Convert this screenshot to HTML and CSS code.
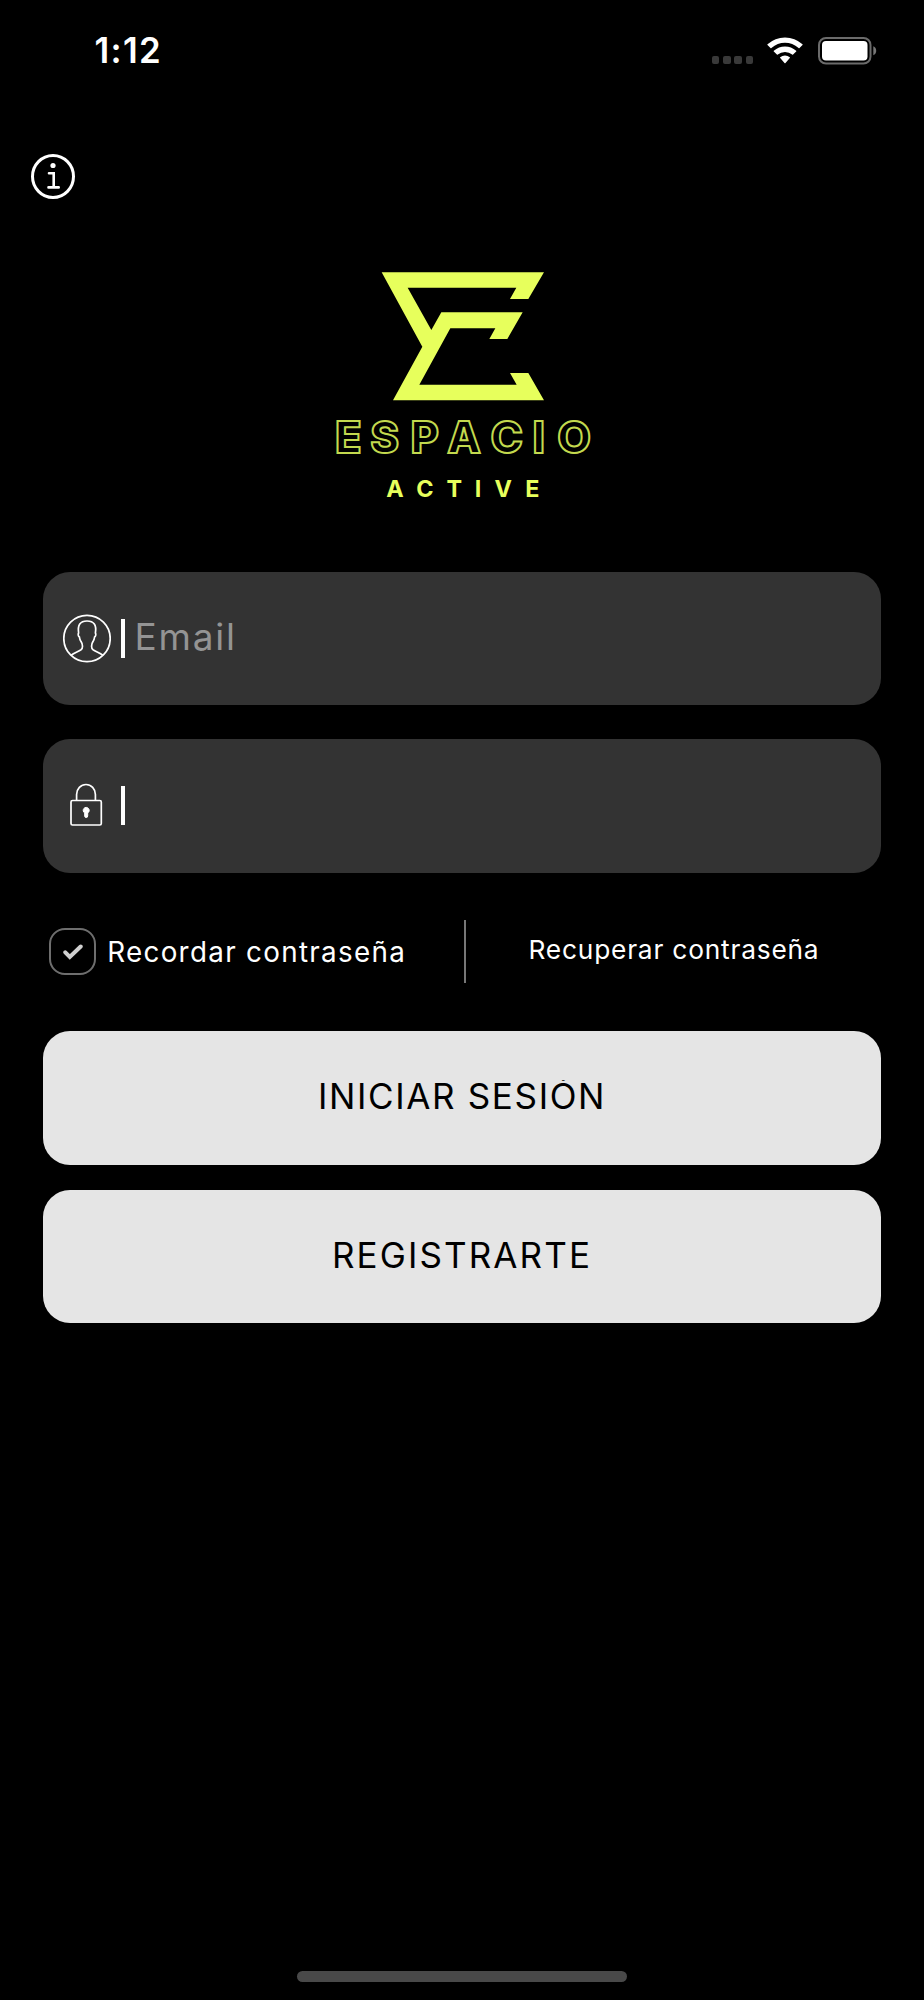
FILE: index.html
```html
<!DOCTYPE html>
<html lang="es">
<head>
<meta charset="UTF-8">
<title>Espacio Active</title>
<meta name="viewport" content="width=device-width, initial-scale=1.0">
<link rel="stylesheet" href="styles.css">
</head>
<body>

<!-- Status bar -->
<header class="status-bar">
    <span class="time">1:12</span>
    <div class="status-icons">
        <div class="signal"><i></i><i></i><i></i><i></i></div>
        <svg class="wifi" viewBox="0 0 36 27" fill="#fff">
            <path d="M.5 7.3Q8 .4 18 .4t17.500 6.900q.4.4 0 .8l-3 3q-.4.4-.9 0Q25.500 5.700 18 5.700T4.400 11.100q-.5.4-.9 0l-3-3q-.4-.4 0-.8z"/>
            <path d="M6.800 13.700Q11.700 9.400 18 9.400t11.200 4.300q.4.4 0 .8l-3.100 3.100q-.4.4-.9 0Q22.200 14.900 18 14.900t-7.200 2.700q-.5.4-.9 0l-3.100-3.100q-.4-.4 0-.8z"/>
            <path d="M13.200 20.300Q15.300 18.500 18 18.500t4.800 1.800q.4.4 0 .8L18.500 25.900q-.5.500-1 0L13.200 21.100q-.4-.4 0-.8z"/>
        </svg>
        <svg class="battery" viewBox="0 0 59 28">
            <rect x="1" y="1" width="51.500" height="25.600" rx="7" fill="none" stroke="#6b6b6b" stroke-width="2"/>
            <rect x="4" y="4" width="45.500" height="19.400" rx="4" fill="#fff"/>
            <path d="M55.300 9.300q2.900 1.300 2.900 4.500t-2.900 4.500z" fill="#777"/>
        </svg>
    </div>
</header>

<main class="login">
    <button class="info" aria-label="Info">
        <svg viewBox="0 0 44 45" fill="none" stroke="#fff">
            <ellipse cx="22" cy="22.500" rx="20.500" ry="21" stroke-width="3"/>
            <circle cx="22" cy="11.500" r="2.600" fill="#fff" stroke="none"/>
            <path d="M18 19.200h4.700v14.200M17.500 33.400h10.200" stroke-width="2.600" stroke-linecap="round"/>
        </svg>
    </button>

    <!-- Logo -->
    <svg class="logo" viewBox="0 0 870 750">
        <path fill="#e7ff5c" d="M185 37H672L625 117H570L589 83H263L334 210 364 157H608L562 237H508L526 205H391L298 374H590L570 339H625L672 421H219L307 260z"/>
        <text class="logo-name" y="579" x="85 194 314 432 560 656 762">ESPACIO</text>
        <text class="logo-sub" y="712" x="225 315 403 474 550 637">ACTIVE</text>
    </svg>

    <div class="field">
        <svg class="field-icon" viewBox="0 0 48 49" fill="none" stroke="#fff" stroke-width="1.700">
            <circle cx="24" cy="24.500" r="23.200"/>
            <path d="M8.300 41.200C11 38.600 15 37.800 18 35.700c2-1.500 2-5.300 0-8.100-1-1.500-1.400-2.900-1.600-4.600-1.200-.7-1.600-2.900-.8-4C14.500 11.200 17 7 24 7s9.700 4.200 8.400 12c.8 1.100.4 3.300-.8 4-.2 1.700-.7 3.100-1.600 4.600-1.900 2.800-1.900 6.600 0 8.100 3 2.100 7 2.900 9.700 5.500"/>
        </svg>
        <span class="caret"></span>
        <span class="placeholder">Email</span>
    </div>

    <div class="field">
        <svg class="field-icon" viewBox="0 0 48 49" fill="none" stroke="#fff" stroke-width="1.700">
            <rect x="8" y="19.500" width="30.300" height="24.500" rx="1.500"/>
            <path d="M13.600 19.500v-6a9.400 10 0 0 1 18.800 0v6"/>
            <path d="M21.700 32a3 3 0 1 1 3 0v3a1.500 1.500 0 0 1-3 0z" fill="#fff" stroke-width="1"/>
        </svg>
        <span class="caret"></span>
    </div>

    <div class="options">
        <label class="remember">
            <span class="checkbox">
                <svg viewBox="0 0 20 16"><path d="M2.300 8.300l4.500 4.700L17.700 2.500" fill="none" stroke="#d0d0d0" stroke-width="4" stroke-linecap="round"/></svg>
            </span>
            <span class="remember-text">Recordar contraseña</span>
        </label>
        <span class="divider"></span>
        <a class="recover">Recuperar contraseña</a>
    </div>

    <button class="btn"><span class="btn-text btn-login">INICIAR SESIÓN</span></button>
    <button class="btn"><span class="btn-text btn-register">REGISTRARTE</span></button>
</main>

<div class="home-bar"></div>

</body>
</html>
```
FILE: styles.css
```css
*{box-sizing:border-box;margin:0;padding:0;}
body{
    height:2000px;
    display:flex;
    flex-direction:column;
    background:#000;
    color:#fff;
    font-family:"Inter","Liberation Sans",sans-serif;
    overflow:hidden;
}
svg{display:block;}

/* ===== Status bar ===== */
.status-bar{
    height:100px;
    display:flex;
    justify-content:space-between;
    padding:0 47px 0 94.500px;
}
.time{
    font-size:34.800px;
    font-weight:600;
    line-height:40px;
    padding-top:30px;
    letter-spacing:1.300px;
}
.status-icons{
    display:flex;
    align-items:flex-start;
    padding-top:37px;
}
.signal{
    display:flex;
    gap:3.700px;
    padding-top:19px;
    margin-right:14px;
}
.signal i{
    width:7.500px;
    height:7.500px;
    border-radius:2px;
    background:#393939;
}
.wifi{width:36px;height:27px;margin-right:15px;}
.battery{width:59px;height:28px;}

/* ===== Login form ===== */
.login{
    flex:1;
    display:flex;
    flex-direction:column;
    padding:54px 42.700px 0;
}
.info{
    width:44px;
    height:45px;
    margin-left:-11.500px;
    background:none;
    border:none;
}
.logo{
    width:290px;
    height:250px;
    margin:61px 0 61.500px 277.300px;
}
.logo-name{
    font:800 131px "Inter",sans-serif;
    text-anchor:middle;
    fill:none;
    stroke:#c3d94e;
    stroke-width:6;
}
.logo-sub{
    font:700 70px "Inter",sans-serif;
    text-anchor:middle;
    fill:#e7ff5c;
}
.field{
    height:133.500px;
    display:flex;
    align-items:center;
    padding-left:20.300px;
    margin-bottom:34px;
    border-radius:27px;
    background:#333;
}
.field-icon{width:48px;height:49px;}
.caret{
    width:4px;
    height:39px;
    margin-left:10.500px;
    background:#fff;
}
.placeholder{
    margin-left:9px;
    padding-bottom:3px;
    font-size:37px;
    letter-spacing:1.800px;
    color:#949494;
}

/* ===== Remember / recover row ===== */
.options{
    height:63px;
    display:flex;
    margin:13px 0 48.500px;
}
.remember{
    width:421.300px;
    display:flex;
    padding:8.800px 0 0 6.500px;
}
.checkbox{
    width:47px;
    height:47px;
    display:flex;
    align-items:center;
    justify-content:center;
    border:2px solid #6e6e6e;
    border-radius:16px;
}
.checkbox svg{width:20px;height:16px;}
.remember-text{
    margin-left:11px;
    padding-top:7.500px;
    font-size:27.800px;
    line-height:32px;
    letter-spacing:1.300px;
}
.divider{
    width:2.500px;
    height:63px;
    background:#777;
}
.recover{
    margin-left:62px;
    padding-top:14px;
    font-size:26.300px;
    line-height:32px;
    letter-spacing:.8px;
}

/* ===== Buttons ===== */
.btn{
    height:133.700px;
    display:flex;
    justify-content:center;
    align-items:flex-start;
    margin-bottom:25px;
    padding-top:43px;
    border:none;
    border-radius:27px;
    background:#e5e5e5;
    color:#000;
}
.btn-text{
    font-family:"Inter","Liberation Sans",sans-serif;
    font-size:35px;
    line-height:44px;
    white-space:nowrap;
}
/* trims the top of the accent */
.btn-login{
    letter-spacing:1.650px;
    clip-path:inset(6px 0 0 0);
}
.btn-register{letter-spacing:2.100px;}

.home-bar{
    width:330px;
    height:11px;
    margin:0 auto 18px;
    border-radius:6px;
    background:#494949;
}
```
